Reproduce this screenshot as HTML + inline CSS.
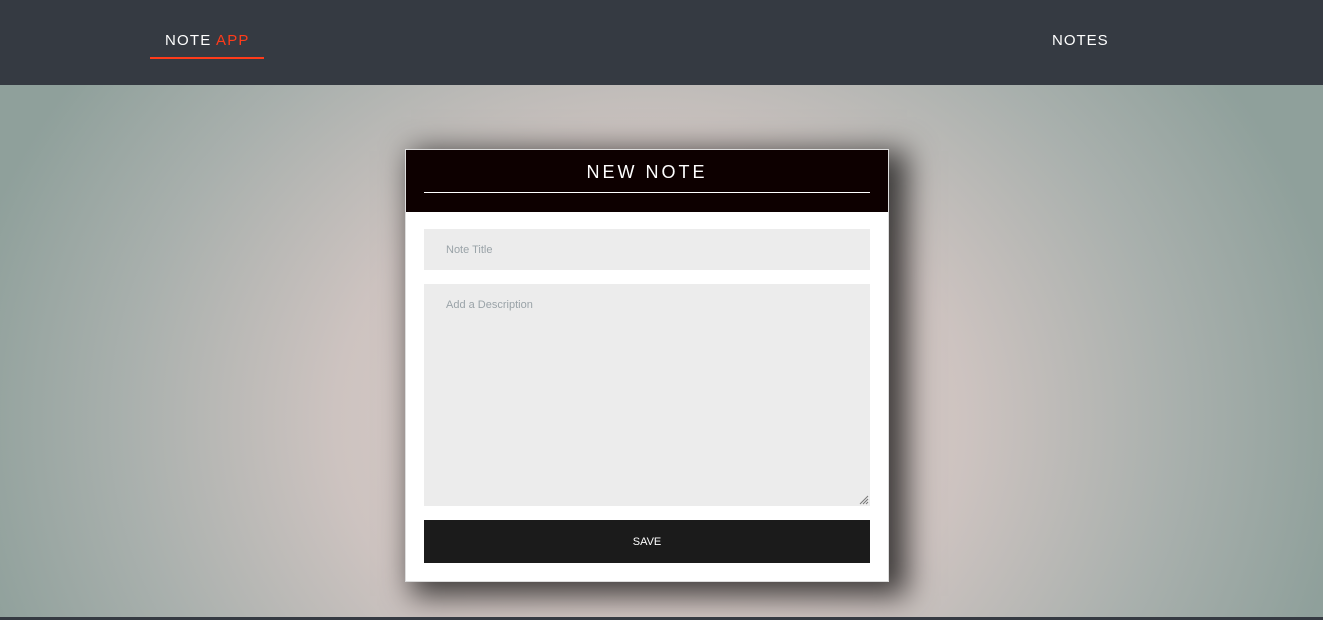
<!DOCTYPE html>
<html><head><meta charset="utf-8"><style>
*{margin:0;padding:0;box-sizing:border-box}
body{width:1323px;height:620px;overflow:hidden;font-family:"Liberation Sans",sans-serif;position:relative;
background:radial-gradient(ellipse 700px 600px at 650px 420px,#e2d2ce 0%,#cdc3c0 45%,#a9b0ad 75%,#8fa09b 100%);}
.nav{position:absolute;left:0;top:0;width:1323px;height:85px;background:#353a42}
.logo{position:absolute;left:165px;top:32px;color:#fff;font-size:15px;letter-spacing:1.2px}
.logo span{color:#ff3b1a}
.uline{position:absolute;left:150px;top:57px;width:114px;height:2px;background:#ff3b1a}
.notes{position:absolute;left:1052px;top:32px;color:#fff;font-size:15px;letter-spacing:1px}
.bottom{position:absolute;left:0;top:617px;width:1323px;height:3px;background:#353a42}
.card{position:absolute;left:405px;top:149px;width:484px;height:433px;background:#fff;border:1px solid #ddd;box-shadow:12px 8px 28px 6px rgba(0,0,0,.7)}
.hd{position:absolute;left:0;top:0;width:482px;height:62px;background:#0d0000}
.hd h1{position:absolute;left:0;width:100%;top:12px;text-align:center;color:#fff;font-weight:normal;font-size:18px;letter-spacing:3px}
.hd .ln{position:absolute;left:18px;top:42px;width:446px;height:1px;background:#fff}
.in{position:absolute;left:18px;width:446px;background:#ececec;color:#9aa3a8;font-size:11px;padding-left:22px}
.t{top:79px;height:41px;line-height:43px}
.d{top:134px;height:222px;padding-top:15px}
.btn{position:absolute;left:18px;top:370px;width:446px;height:43px;background:#1b1b1b;color:#fff;font-size:11px;text-align:center;line-height:44px}
</style></head><body>
<div class="nav"><div class="logo">NOTE <span>APP</span></div><div class="uline"></div><div class="notes">NOTES</div></div>
<div class="card">
<div class="hd"><h1>NEW NOTE</h1><div class="ln"></div></div>
<div class="in t">Note Title</div>
<div class="in d">Add a Description
<svg style="position:absolute;right:1px;bottom:1px" width="10" height="10"><path d="M9 1L1 9M9 4L4 9M9 7L7 9" stroke="#777" stroke-width="1"/></svg></div>
<div class="btn">SAVE</div>
</div>
<div class="bottom"></div>
</body></html>
